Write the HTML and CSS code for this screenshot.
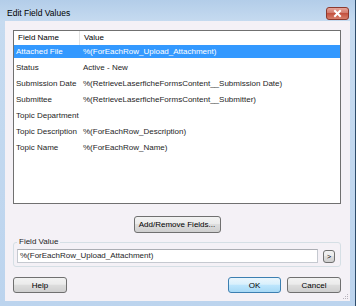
FILE: index.html
```html
<!DOCTYPE html>
<html>
<head>
  <title>Edit Field Values</title>
  <link rel="stylesheet" href="styles.css">
</head>
<body>
  <div class="window">
    <div class="titlebar">
      <span class="title">Edit Field Values</span>
      <span class="close">
        <svg width="23" height="13" viewBox="0 0 23 13">
          <defs>
            <linearGradient id="red" x1="0" y1="0" x2="0" y2="1">
              <stop offset="0" stop-color="#e8a99f"/>
              <stop offset="0.45" stop-color="#d27a6c"/>
              <stop offset="0.5" stop-color="#c4513f"/>
              <stop offset="1" stop-color="#d9836f"/>
            </linearGradient>
          </defs>
          <rect x="0.5" y="0.5" width="22" height="12" rx="2.5" fill="url(#red)" stroke="#8b3a2f"/>
          <path d="M9 4 L14 9 M14 4 L9 9" stroke="#ffffff" stroke-width="2" stroke-linecap="square"/>
        </svg>
      </span>
    </div>
    <div class="client">
      <div class="listview">
        <div class="lv-header">
          <div class="lv-col1">Field Name</div>
          <div class="lv-col2">Value</div>
        </div>
        <div class="lv-rows">
          <div class="lv-row selected"><div class="cell1">Attached File</div><div class="cell2">%(ForEachRow_Upload_Attachment)</div></div>
          <div class="lv-row"><div class="cell1">Status</div><div class="cell2">Active - New</div></div>
          <div class="lv-row"><div class="cell1">Submission Date</div><div class="cell2">%(RetrieveLaserficheFormsContent__Submission Date)</div></div>
          <div class="lv-row"><div class="cell1">Submittee</div><div class="cell2">%(RetrieveLaserficheFormsContent__Submitter)</div></div>
          <div class="lv-row"><div class="cell1">Topic Department</div><div class="cell2"></div></div>
          <div class="lv-row"><div class="cell1">Topic Description</div><div class="cell2">%(ForEachRow_Description)</div></div>
          <div class="lv-row"><div class="cell1">Topic Name</div><div class="cell2">%(ForEachRow_Name)</div></div>
        </div>
      </div>

      <div class="center-row">
        <button class="btn btn-fields">Add/Remove Fields...</button>
      </div>

      <fieldset class="group">
        <legend>Field Value</legend>
        <div class="value-row">
          <div class="textbox">%(ForEachRow_Upload_Attachment)</div>
          <button class="btn btn-small">&gt;</button>
        </div>
      </fieldset>

      <div class="bottom-row">
        <button class="btn btn-help">Help</button>
        <div class="right-buttons">
          <button class="btn btn-ok">OK</button>
          <button class="btn btn-cancel">Cancel</button>
        </div>
      </div>

      <svg class="grip" width="6" height="6" viewBox="0 0 6 6">
        <rect x="4" y="0" width="1" height="1" fill="#b8b4bc"/>
        <rect x="2" y="2" width="1" height="1" fill="#b8b4bc"/>
        <rect x="4" y="2" width="1" height="1" fill="#b8b4bc"/>
        <rect x="0" y="4" width="1" height="1" fill="#b8b4bc"/>
        <rect x="2" y="4" width="1" height="1" fill="#b8b4bc"/>
        <rect x="4" y="4" width="1" height="1" fill="#b8b4bc"/>
      </svg>
    </div>
  </div>
</body>
</html>
```

FILE: styles.css
```css
body {
  margin: 0;
  width: 356px;
  height: 306px;
  overflow: hidden;
  font-family: "Liberation Sans", Arial, sans-serif;
  font-size: 8px;
  color: #1e1e1e;
  background: #ffffff;
}

.window {
  width: 356px;
  height: 306px;
  box-sizing: border-box;
  background: linear-gradient(#b3cde9, #c6dbf0 22px, #bcd4ee);
  border-right: 1px solid #2e4d6c;
  display: flex;
  flex-direction: column;
}

.titlebar {
  height: 21px;
  display: flex;
  justify-content: space-between;
  align-items: flex-start;
  padding: 0 6px 0 7px;
}

.titlebar .title {
  font-size: 8.5px;
  line-height: 10px;
  margin-top: 8px;
  color: #000000;
}

.titlebar .close {
  margin-top: 7px;
  height: 13px;
}

.client {
  position: relative;
  margin: 0 5px 0 5px;
  height: 280px;
  box-sizing: border-box;
  background: #f4f1f6;
  padding: 9px 9px 0 8px;
  display: flex;
  flex-direction: column;
}

.listview {
  height: 174px;
  box-sizing: border-box;
  border: 1px solid #707070;
  background: #ffffff;
}

.lv-header {
  display: flex;
  height: 14px;
  line-height: 14px;
  color: #000000;
}

.lv-col1 {
  width: 66px;
  padding-left: 4px;
  box-sizing: border-box;
  border-right: 1px solid #e3e3e3;
}

.lv-col2 {
  padding-left: 4px;
}

.lv-rows {
  display: flex;
  flex-direction: column;
  gap: 3px;
}

.lv-row {
  display: flex;
  height: 13px;
  line-height: 13px;
  white-space: nowrap;
}

.lv-row.selected {
  background: #3399ff;
  color: #ffffff;
}

.cell1 {
  width: 67px;
  padding-left: 2px;
  box-sizing: border-box;
}

.cell2 {
  padding-left: 2px;
}

.btn {
  font-family: "Liberation Sans", Arial, sans-serif;
  font-size: 8px;
  color: #000000;
  padding: 0;
  border: 1px solid #707070;
  border-radius: 3px;
  background: linear-gradient(#f2f2f2, #ebebeb 45%, #dddddd 50%, #cfcfcf);
  box-sizing: border-box;
}

.center-row {
  display: flex;
  justify-content: center;
  margin-top: 12px;
}

.btn-fields {
  width: 87px;
  height: 17px;
}

.group {
  margin: 4px 0 0 0;
  padding: 2px 5px 3px 3px;
  border: 1px solid #d5dfe5;
  border-radius: 3px;
}

.group legend {
  padding: 0 2px;
  line-height: 10px;
  color: #1e1e1e;
}

.value-row {
  display: flex;
  align-items: center;
  gap: 5px;
}

.textbox {
  flex: 1;
  height: 14px;
  line-height: 12px;
  box-sizing: border-box;
  border: 1px solid #c5c9d0;
  border-top-color: #abadb3;
  background: #ffffff;
  padding-left: 2px;
  white-space: nowrap;
}

.btn-small {
  width: 12px;
  height: 13px;
  font-size: 7px;
  line-height: 11px;
}

.bottom-row {
  display: flex;
  justify-content: space-between;
  margin-top: 10px;
}

.right-buttons {
  display: flex;
  gap: 6px;
}

.btn-help {
  width: 54px;
  height: 16px;
}

.btn-ok {
  width: 53px;
  height: 16px;
  border-color: #3c7fb1;
  background: linear-gradient(#eaf6fd, #d9f0fc 45%, #bee6fd 50%, #a7d9f5);
}

.btn-cancel {
  width: 54px;
  height: 16px;
}

.grip {
  position: absolute;
  right: 1px;
  bottom: 1px;
}
```
